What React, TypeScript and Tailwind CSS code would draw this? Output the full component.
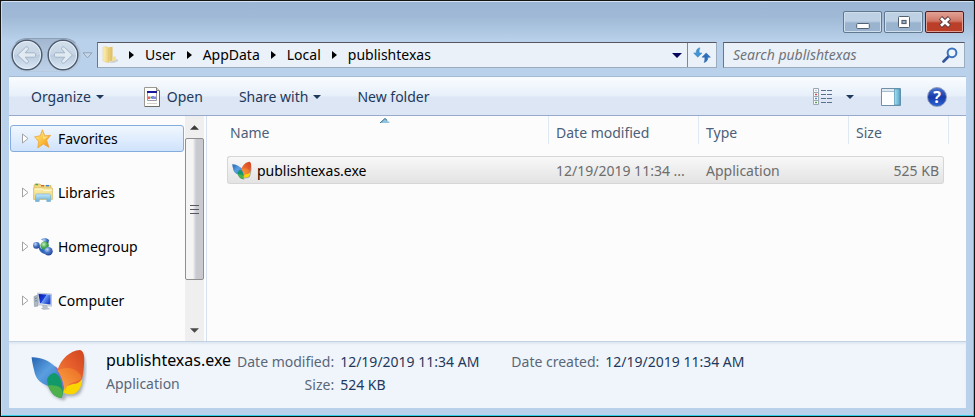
import type { ReactNode } from "react";

function BackArrow() {
  return (
    <svg viewBox="0 0 32 32" className="size-full" aria-hidden="true">
      <defs>
        <linearGradient id="orb" x1="0" y1="0" x2="0" y2="1">
          <stop offset="0" stopColor="#d3dfeb" />
          <stop offset="0.48" stopColor="#c6d5e5" />
          <stop offset="0.52" stopColor="#b9cbdf" />
          <stop offset="1" stopColor="#dbe8f5" />
        </linearGradient>
      </defs>
      <circle cx="16" cy="16" r="14.8" fill="url(#orb)" stroke="#4f5d6e" strokeWidth="1.5" />
      <circle cx="16" cy="16" r="13.6" fill="none" stroke="#e6eef7" strokeWidth="1" />
      <path
        d="M6.500 16 14.600 8.200c1.800-1.200 3.800.8 2.400 2.400L14.200 13.800h9.200c1.800 0 1.800 4.400 0 4.400h-9.200l2.800 3.200c1.400 1.600-.6 3.600-2.400 2.400Z"
        fill="#e1e9f1"
        stroke="#a2b4c8"
        strokeWidth="1"
      />
    </svg>
  );
}

function FolderIcon() {
  return (
    <svg viewBox="0 0 18 18" className="size-[18px] shrink-0" aria-hidden="true">
      <defs>
        <linearGradient id="fold" x1="0" y1="0" x2="1" y2="0">
          <stop offset="0" stopColor="#fdf2b8" />
          <stop offset="1" stopColor="#eccf76" />
        </linearGradient>
        <linearGradient id="foldBack" x1="0" y1="0" x2="1" y2="0">
          <stop offset="0" stopColor="#f0d98c" />
          <stop offset="1" stopColor="#dfbd5f" />
        </linearGradient>
      </defs>
      <path d="M11 14.500 16.500 13l.5 2-4 1.800H8Z" fill="#b9c4cf" opacity=".8" />
      <path d="M5.500 1.500 11.500.800v13.700l-4 1.500Z" fill="url(#foldBack)" />
      <path d="M2 1.200 5.500.600 7.500 2.500v14.300L2 15Z" fill="url(#fold)" stroke="#e0c36f" strokeWidth=".4" />
      <path d="M11.500 10.500h3.300v4l-5 1.500 1.700-2Z" fill="#f3dd96" />
    </svg>
  );
}

function RefreshIcon() {
  return (
    <svg viewBox="0 0 18 16" className="h-4 w-[18px]" aria-hidden="true">
      <path d="M7 .8C4 1.300 3 3.500 3.200 6H.6l4.200 4.200L9 6H6.300C6.100 4.200 6 2.500 7 .8Z" fill="#3f95d6" stroke="#3880bd" strokeWidth=".5" />
      <path d="M11 15.400c3-.6 4-2.800 3.800-5.200h2.600L13.200 6 9 10.200h2.700c.2 1.800.3 3.500-.7 5.200Z" fill="#2e6fbd" stroke="#2862a5" strokeWidth=".5" />
    </svg>
  );
}

function SearchIcon() {
  return (
    <svg viewBox="0 0 16 16" className="size-4" aria-hidden="true">
      <path d="M6.500 9.500 1.500 14.500" stroke="#31569c" strokeWidth="2.600" strokeLinecap="round" />
      <circle cx="10" cy="5.800" r="4.400" fill="#eef6fd" stroke="#3a72bd" strokeWidth="2" />
    </svg>
  );
}

function DocumentIcon() {
  return (
    <svg viewBox="0 0 16 20" className="h-5 w-4" aria-hidden="true">
      <path d="M.5.5h12l3 3v16H.5Z" fill="#fdfdfb" stroke="#9c9991" />
      <path d="M12.500.5v3h3" fill="#d6d3cb" stroke="#85827a" />
      <path d="M15.500 4v15.500H1" fill="none" stroke="#6e6c66" />
      <path d="M3.500 4.500h9v9h-9Z" fill="#fff" stroke="#9b99a4" />
      <path d="M3 4h10v2H3Z" fill="#17179b" />
      <path d="M5 9.500v2.500" stroke="#d92a30" strokeWidth="1.500" />
      <path d="M6.500 10.500H8" stroke="#3a9b42" strokeWidth="2" />
      <path d="M9 9v3M11 9.500v2.500" stroke="#2b38d0" strokeWidth="1.200" />
      <path d="M3 16.500h10" stroke="#d3d0c9" />
    </svg>
  );
}

function ViewIcon() {
  return (
    <svg viewBox="0 0 20 17" className="h-[17px] w-5" aria-hidden="true">
      {["#b9cfe4", "#d44848", "#4d86c8", "#54a84c"].map((c, i) => (
        <g key={c} transform={`translate(0 ${i * 4})`}>
          <path d="M.5.5h5v4h-5Z" fill="#fff" stroke="#9ba7b4" />
          <path d="M2 2.500h2" stroke={c} strokeWidth="1.500" />
          <path d="M8 2.500h5M14 2.500h5" stroke="#5c6f8b" strokeWidth="1" />
        </g>
      ))}
    </svg>
  );
}

function PreviewIcon() {
  return (
    <svg viewBox="0 0 20 18" className="h-[18px] w-5" aria-hidden="true">
      <defs>
        <linearGradient id="pane" x1="0" y1="0" x2="1" y2="0">
          <stop offset="0" stopColor="#a8deef" />
          <stop offset="1" stopColor="#56a9cb" />
        </linearGradient>
      </defs>
      <path d="M.5.5h19v17H.5Z" fill="#fdfeff" stroke="#6f8fa9" />
      <path d="M1 1h13v2H1Z" fill="#dfe9f2" />
      <path d="M1 3.500h13" stroke="#a9bccd" />
      <path d="M13.500 1h5.500v16h-5.500Z" fill="url(#pane)" stroke="#4f92b3" strokeWidth=".7" />
    </svg>
  );
}

function HelpIcon() {
  return (
    <span className="flex size-5 items-center justify-center rounded-full border border-[#8b98b8] bg-linear-to-b from-[#4b73cf] via-[#173aa9] to-[#2c62d3] text-[16px] leading-4 font-bold text-white">
      ?
    </span>
  );
}

function StarIcon() {
  return (
    <svg viewBox="0 0 20 20" className="size-5" aria-hidden="true">
      <defs>
        <linearGradient id="star" x1="0" y1="0" x2="1" y2="1">
          <stop offset="0" stopColor="#fff0a0" />
          <stop offset=".5" stopColor="#fcc440" />
          <stop offset="1" stopColor="#ef8d1c" />
        </linearGradient>
      </defs>
      <path d="m9.400.8 2.400 6 5.800-.4-4 4.800 2.400 7.200-5.600-3.400L4.800 19l.8-6.400L1.600 7.800l5.600-1Z" fill="url(#star)" stroke="#eda53a" strokeWidth=".8" strokeLinejoin="round" />
      <path d="m9.400 2.600 1.400 5.200 4.600-.2-5 3Z" fill="#fff6c8" opacity=".6" />
    </svg>
  );
}

function LibrariesIcon() {
  return (
    <svg viewBox="0 0 20 19" className="h-[19px] w-5" aria-hidden="true">
      <defs>
        <linearGradient id="lib" x1="0" y1="0" x2="0" y2="1">
          <stop offset="0" stopColor="#fbeea8" />
          <stop offset="1" stopColor="#ecd27a" />
        </linearGradient>
        <linearGradient id="stand" x1="0" y1="0" x2="0" y2="1">
          <stop offset="0" stopColor="#c4e8f8" />
          <stop offset="1" stopColor="#64aeda" />
        </linearGradient>
      </defs>
      <path d="M1 2.500C1 1.500 2 1 3 1h4l1.500 1.500H18V8H1Z" fill="#f1d77e" stroke="#c9a94d" strokeWidth=".6" />
      <path d="M2.500 1.500h2.500" stroke="#42a558" strokeWidth="1.500" />
      <path d="M8 2.700h3" stroke="#d65e3c" strokeWidth="1.500" />
      <path d="M13 2.700h3" stroke="#4685c6" strokeWidth="1.500" />
      <path d="M.6 5h18.800v11.500H.6Z" fill="url(#lib)" stroke="#d3b765" strokeWidth=".7" />
      <path d="M1.500 6h8l1.200 1.500h7.800" fill="none" stroke="#fff7cd" />
      <path d="M2.500 18.500v-5.800c0-1.100.8-1.700 1.800-1.700h11.400c1 0 1.800.6 1.800 1.700v5.800h-3.700v-2.700H6.200v2.700Z" fill="url(#stand)" stroke="#7db4d6" strokeWidth=".7" />
    </svg>
  );
}

function HomegroupIcon() {
  return (
    <svg viewBox="0 0 20 18" className="h-[18px] w-5" aria-hidden="true">
      <defs>
        <radialGradient id="blueBall" cx=".35" cy=".3" r=".8">
          <stop offset="0" stopColor="#c0daf9" />
          <stop offset=".45" stopColor="#4c7bca" />
          <stop offset="1" stopColor="#1b3688" />
        </radialGradient>
        <radialGradient id="greenBall" cx=".4" cy=".35" r=".75">
          <stop offset="0" stopColor="#c9f0bf" />
          <stop offset=".5" stopColor="#4aad55" />
          <stop offset="1" stopColor="#1f7a38" />
        </radialGradient>
      </defs>
      <path d="M8 1.500C10.500-.300 14.500 0 16 2.200l-1 4.500H9.500l1-3.700Z" fill="url(#blueBall)" />
      <circle cx="3.400" cy="7.400" r="3.300" fill="url(#blueBall)" />
      <path d="M6 6.500c-.8 5 1 8.500 6 9.500l1-4-5-1.500Z" fill="#2d67bb" />
      <circle cx="11.600" cy="7.600" r="4.200" fill="url(#greenBall)" />
      <circle cx="15.400" cy="13.200" r="4.300" fill="url(#blueBall)" />
    </svg>
  );
}

function ComputerIcon() {
  return (
    <svg viewBox="0 0 20 18" className="h-[18px] w-5" aria-hidden="true">
      <defs>
        <linearGradient id="screen" x1="0" y1="0" x2="1" y2=".6">
          <stop offset="0" stopColor="#0a1899" />
          <stop offset=".5" stopColor="#173ce0" />
          <stop offset=".55" stopColor="#6d9cf3" />
          <stop offset="1" stopColor="#1a43cd" />
        </linearGradient>
      </defs>
      <path d="m1 4.500 4-1.500v11l-3.500.5Z" fill="#aeb9c6" stroke="#8793a1" strokeWidth=".6" />
      <path d="m2 6.500 2-.5M2 9l2-.3" stroke="#65717e" strokeWidth=".8" />
      <path d="m4.500 1 14 1v12.200L6 12.800Z" fill="#dce3ea" stroke="#a0adba" strokeWidth=".6" />
      <path d="m5.500 2 12 .8v9.800L7 11.300Z" fill="url(#screen)" />
      <path d="m9.500 13.300 4.500.5.500 2.200 2 1-6 .5-2-1 1.500-1Z" fill="#bac3cd" stroke="#9aa5b0" strokeWidth=".4" />
    </svg>
  );
}

function ButterflyIcon({ className }: { className: string }) {
  return (
    <svg viewBox="0 0 56 54" className={className} aria-hidden="true">
      <defs>
        <linearGradient id="wingBlue" x1="0" y1="0" x2="1" y2="1">
          <stop offset="0" stopColor="#2563b0" />
          <stop offset=".45" stopColor="#5b9fe0" />
          <stop offset="1" stopColor="#2a6fc0" />
        </linearGradient>
        <linearGradient id="wingRed" x1="1" y1="0" x2="0" y2="1">
          <stop offset="0" stopColor="#cf4420" />
          <stop offset=".5" stopColor="#e8622d" />
          <stop offset="1" stopColor="#f08a3c" />
        </linearGradient>
        <linearGradient id="wingOrange" x1="1" y1="0" x2="0" y2="1">
          <stop offset="0" stopColor="#ec6a22" />
          <stop offset="1" stopColor="#fbab4a" />
        </linearGradient>
        <filter id="soft" x="-20%" y="-20%" width="150%" height="150%">
          <feGaussianBlur stdDeviation="1.500" />
        </filter>
      </defs>
      <path d="M4 12c12 0 19 4 25 12C34 11 44 4 52 5c5 10 2 30-2 38-3 5-10 5-15 4 0 4-2 5-4 4-8-2-12-8-14-13C8 32 4 20 4 12Z" fill="#6d7280" opacity=".55" filter="url(#soft)" />
      <path d="M.6 8.200C10 8 18 11.500 24 17.500c5 5 8 13 8 20.500l-6 2c-4-1-6-2-9-3-7-3-11-6-13-12C2.500 19 1 13 .6 8.200Z" fill="url(#wingBlue)" />
      <path d="M16 31c1-4 4-7 8-7 5 3 8 9 8 15 0 4 0 7-1.500 10-4-.5-6.500-2-8.500-4-3-3.500-5-8-6-14Z" fill="#12996a" />
      <path d="M17 36.500c5-.5 9 0 12 2 1.500 1.500 2.500 3 2.500 5 0 2-.2 4-1 5.500-4-.5-6.500-2-8.500-4-2-2.300-4-5-5-8.500Z" fill="#4db04a" />
      <path d="M23.300 17.500c2-.5 3.800 2 5.200 5.500l5 15-1.500 5c-.5-9-3-17-8.700-25.500Z" fill="#8770c4" />
      <path d="M51 29c.5 6-2 12-7 15.500-4 1.500-9 1-11.500-1L34 37Z" fill="#fbd500" />
      <path d="M26.500 21C30 10 39 1.500 49 1c3.500 1 4.500 5.500 4.200 11-.2 6.500-1 13-2.200 18-2 3-5 5-9 5l-9 3c-.5-6-2.500-12-6.500-17Z" fill="url(#wingRed)" />
      <path d="M26.500 21.500c5-3 12-3.500 17.500-.5 4 2.200 6.800 5.500 6.500 9-5 3-11 3.500-13.500 6-1.500 1.500-2.500 4-3 6.500-1-7.500-3-15-7.500-21Z" fill="url(#wingOrange)" />
    </svg>
  );
}

function Triangle({ className }: { className: string }) {
  return (
    <svg viewBox="0 0 8 4" className={className} aria-hidden="true">
      <path d="M0 0h8L4 4Z" fill="currentColor" />
    </svg>
  );
}

function Crumb({ children }: { children: ReactNode }) {
  return (
    <li className="flex items-center gap-[11px]">
      <svg viewBox="0 0 5 8" className="h-2 w-[5px]" aria-hidden="true">
        <path d="M0 0v8l5-4Z" fill="#000" />
      </svg>
      <button type="button">{children}</button>
    </li>
  );
}

const caption =
  "flex h-[22px] w-[39px] items-center justify-center rounded-[2px] border border-[#62788f] bg-linear-to-b from-[#bdd0e4] from-45% to-[#9ab3ce] to-55% shadow-[inset_0_0_0_1px_#cfdeed]";

function TitleBar() {
  return (
    <header className="flex justify-end gap-[2px] pt-[9px] pr-[2px]">
      <button type="button" aria-label="Minimize" className={caption}>
        <svg viewBox="0 0 14 14" className="mt-1 size-[14px]" aria-hidden="true">
          <rect x=".7" y="6.500" width="12.600" height="5" rx="1" fill="#fff" stroke="#53606f" />
        </svg>
      </button>
      <button type="button" aria-label="Maximize" className={caption}>
        <svg viewBox="0 0 14 14" className="size-[14px]" aria-hidden="true">
          <rect x="1.500" y="1.500" width="11" height="11" rx="1" fill="#fff" stroke="#53606f" />
          <rect x="5" y="5.500" width="4" height="3" fill="#a8bdd3" stroke="#53606f" strokeWidth="1.200" />
        </svg>
      </button>
      <button
        type="button"
        aria-label="Close"
        className="flex h-[22px] w-[39px] items-center justify-center rounded-[2px] border border-[#551a1f] bg-linear-to-b from-[#df9e92] from-5% via-[#d07766] via-45% to-[#bb3e28] to-55% shadow-[inset_0_0_0_1px_#dfa196]"
      >
        <svg viewBox="0 0 14 14" className="size-[14px]" aria-hidden="true">
          <path d="m2.500 2.800 9 8.400m0-8.400-9 8.400" stroke="#5b3b40" strokeWidth="4.600" />
          <path d="m3 3.200 8 7.600m0-7.600-8 7.600" stroke="#fff" strokeWidth="2.800" />
        </svg>
      </button>
    </header>
  );
}

function AddressRow() {
  return (
    <div className="flex h-11 items-center pr-px">
      <div className="flex h-[34px] items-center gap-1 rounded-full border border-[#b5c9df] border-t-[#8b9fb6] bg-linear-to-b from-[#a3b8d0] to-[#bdd1e8] pr-px">
        <button type="button" aria-label="Back" className="size-8">
          <BackArrow />
        </button>
        <button type="button" aria-label="Forward" className="size-8 -scale-x-100">
          <BackArrow />
        </button>
      </div>
      <button type="button" aria-label="Recent pages" className="ml-px w-[11px]">
        <svg viewBox="0 0 11 7" className="h-[7px] w-[11px]" aria-hidden="true">
          <path d="M1 .8h9L5.500 5.800Z" fill="#c9d9ea" stroke="#8fa3ba" />
        </svg>
      </button>
      <div className="ml-1 flex h-[26px] min-w-0 flex-1 border border-[#9aabbd] border-t-[#565761] border-l-[#6d7683] bg-[#ebf1f8]">
        <div className="flex flex-1 items-center pl-[3px]">
          <FolderIcon />
          <ol className="flex items-center gap-[11px] pl-[10px]">
            <Crumb>User</Crumb>
            <Crumb>AppData</Crumb>
            <Crumb>Local</Crumb>
            <Crumb>publishtexas</Crumb>
          </ol>
        </div>
        <button type="button" aria-label="Previous locations" className="px-[5px] text-[#06065c]">
          <Triangle className="h-[5px] w-[10px]" />
        </button>
        <button type="button" aria-label="Refresh" className="flex w-[29px] items-center justify-center border-l border-[#7e8998]">
          <RefreshIcon />
        </button>
      </div>
      <div className="ml-[6px] flex h-[26px] w-[242px] items-center border border-[#9aabbd] border-t-[#565761] border-l-[#6d7683] bg-[#ebf1f8] pr-[6px] pl-[9px]">
        <input
          type="text"
          aria-label="Search publishtexas"
          placeholder="Search publishtexas"
          className="min-w-0 flex-1 bg-transparent italic outline-none placeholder:text-[#6f747b]"
        />
        <button type="button" aria-label="Search">
          <SearchIcon />
        </button>
      </div>
    </div>
  );
}

function Toolbar() {
  return (
    <div className="flex h-[39px] items-center border-t border-b border-t-[#f7fbff] border-b-[#98a9cc] bg-linear-to-b from-[#f9fcff] via-[#e7effa] via-49% to-[#dce6f4] to-51% pr-[19px] pl-[22px] text-[#1e395b] shadow-[0_-1px_0_#a5bbd4]">
      <button type="button" className="flex items-center gap-[5px]">
        Organize
        <Triangle className="h-1 w-2" />
      </button>
      <button type="button" className="ml-10 flex items-center gap-[7px]">
        <DocumentIcon />
        Open
      </button>
      <button type="button" className="ml-9 flex items-center gap-[5px]">
        Share with
        <Triangle className="h-1 w-2" />
      </button>
      <button type="button" className="ml-9">
        New folder
      </button>
      <button type="button" aria-label="Change view" className="ml-auto">
        <ViewIcon />
      </button>
      <button type="button" aria-label="More options" className="ml-[13px]">
        <Triangle className="h-1 w-2" />
      </button>
      <button type="button" aria-label="Show preview pane" className="ml-[27px]">
        <PreviewIcon />
      </button>
      <button type="button" aria-label="Get help" className="ml-[26px]">
        <HelpIcon />
      </button>
    </div>
  );
}

const places = [
  { name: "Favorites", icon: <StarIcon />, active: true },
  { name: "Libraries", icon: <LibrariesIcon />, active: false },
  { name: "Homegroup", icon: <HomegroupIcon />, active: false },
  { name: "Computer", icon: <ComputerIcon />, active: false },
];

function Sidebar() {
  return (
    <aside className="flex w-[198px] shrink-0 border-r border-[#d5e1f0]">
      <nav className="min-w-0 flex-1 px-px pt-[9px]">
        <ul className="flex flex-col gap-[27px]">
          {places.map((p) => (
            <li key={p.name}>
              <button
                type="button"
                className={
                  p.active
                    ? "flex h-[27px] w-full items-center rounded-[3px] border border-[#84acdd] bg-linear-to-b from-[#f1f7fe] to-[#cfe3fc] pl-[11px] text-black"
                    : "flex h-[27px] w-full items-center border border-transparent pl-[11px] text-black"
                }
              >
                <svg viewBox="0 0 7 11" className="h-[11px] w-[7px]" aria-hidden="true">
                  <path d="M.5 1v9L6 5.500Z" fill="#fff" stroke="#a2a2a2" />
                </svg>
                <span className="ml-1 flex w-5 justify-center">{p.icon}</span>
                <span className="ml-[5px]">{p.name}</span>
              </button>
            </li>
          ))}
        </ul>
      </nav>
      <div className="mr-[2px] flex w-[19px] flex-col bg-[#efefef]">
        <button type="button" aria-label="Scroll up" className="flex h-[22px] items-center justify-center text-[#3a3a3a]">
          <Triangle className="h-[5px] w-[9px] rotate-180" />
        </button>
        <div className="flex h-[142px] flex-col items-center justify-center gap-[3px] rounded-[2px] border border-[#8f8f8f] bg-linear-to-r from-[#f5f5f5] from-40% to-[#c9c9d0] to-60%">
          <i className="h-px w-[9px] bg-[#55585e]" />
          <i className="h-px w-[9px] bg-[#55585e]" />
          <i className="h-px w-[9px] bg-[#55585e]" />
        </div>
        <button type="button" aria-label="Scroll down" className="mt-auto flex h-[22px] items-center justify-center text-[#4a4a4a]">
          <Triangle className="h-[5px] w-[9px]" />
        </button>
      </div>
    </aside>
  );
}

const head = "h-7 border-r border-[#dfe9f3] pt-[7px] text-left font-normal";
const cell = "h-7 border-y border-[#d6d6d6] bg-linear-to-b from-[#f8f8f8] to-[#e3e3e3] pt-[2px] pb-0";

function FileList() {
  return (
    <main className="relative min-w-0 flex-1 pr-[17px] pl-5">
      <svg viewBox="0 0 10 5" className="absolute top-[2px] left-[173px] h-[5px] w-[10px]" aria-hidden="true">
        <path d="M0 5 5 0l5 5Z" fill="#8fc3de" />
        <path d="M0 5 5 .5 7 2.300" fill="none" stroke="#386f8e" />
      </svg>
      <table className="w-full table-fixed border-separate border-spacing-0">
        <colgroup>
          <col />
          <col className="w-[150px]" />
          <col className="w-[150px]" />
          <col className="w-[95px]" />
          <col className="w-[5px]" />
        </colgroup>
        <thead className="text-[#4c607a]">
          <tr>
            <th className="h-10 p-0 align-top">
              <div className={`${head} pl-[3px]`}>Name</div>
            </th>
            <th className="h-10 p-0 align-top">
              <div className={`${head} pl-[7px]`}>Date modified</div>
            </th>
            <th className="h-10 p-0 align-top">
              <div className={`${head} pl-[7px]`}>Type</div>
            </th>
            <th colSpan={2} className="h-10 p-0 align-top">
              <div className={`${head} pl-[7px]`}>Size</div>
            </th>
          </tr>
        </thead>
        <tbody className="text-[#6d6d6d]">
          <tr>
            <td className={`${cell} rounded-l-[3px] border-l px-0`}>
              <span className="flex items-center gap-[5px] pl-1 text-black">
                <ButterflyIcon className="h-5 w-5" />
                publishtexas.exe
              </span>
            </td>
            <td className={`${cell} pr-0 pl-[7px]`}>12/19/2019 11:34 ...</td>
            <td className={`${cell} pr-0 pl-[7px]`}>Application</td>
            <td className={`${cell} rounded-r-[3px] border-r pr-1 pl-0 text-right`}>525 KB</td>
            <td className="p-0" />
          </tr>
        </tbody>
      </table>
    </main>
  );
}

function Details() {
  return (
    <footer className="flex h-[67px] border-t border-[#c3d2e3] bg-[#f0f5fb] pl-[22px] text-[#5a6779] shadow-[inset_0_2px_2px_#dfe8f3]">
      <ButterflyIcon className="mt-[7px] h-[54px] w-14" />
      <div className="ml-[19px] w-[131px] pt-[6px]">
        <h1 className="text-[16px] leading-6 text-black">publishtexas.exe</h1>
        <p className="leading-6">Application</p>
      </div>
      <dl className="grid grid-cols-[auto_auto] content-start gap-x-[6px] gap-y-[3px] pt-[10px]">
        <dt className="text-right">Date modified:</dt>
        <dd className="text-[#1e395b]">12/19/2019 11:34 AM</dd>
        <dt className="text-right">Size:</dt>
        <dd className="text-[#1e395b]">524 KB</dd>
      </dl>
      <dl className="ml-8 flex gap-[6px] pt-[10px]">
        <dt>Date created:</dt>
        <dd className="text-[#1e395b]">12/19/2019 11:34 AM</dd>
      </dl>
    </footer>
  );
}

export default function App() {
  return (
    <div className="flex min-h-screen flex-col border border-[#141414] bg-[#b9d1ea] bg-[linear-gradient(#9bb5d5,#a0b9d6_16px,#b9d1ea_40px)] font-['Noto_Sans','Segoe_UI',sans-serif] text-[14px] leading-5 whitespace-nowrap">
      <div className="flex flex-1 flex-col rounded-t-[3px] border border-t-[#d5e3f2] border-r-[#35d0e8] border-b-[#35d0e8] border-l-[#c9dcf0] px-[7px] pb-[7px]">
        <div className="-mx-px flex flex-1 flex-col">
          <div className="pr-px pl-[2px]">
            <TitleBar />
            <AddressRow />
          </div>
          <div className="flex flex-1 flex-col px-px">
            <Toolbar />
            <div className="flex flex-1 bg-[#fcfcfc]">
              <Sidebar />
              <FileList />
            </div>
            <Details />
          </div>
        </div>
      </div>
    </div>
  );
}
